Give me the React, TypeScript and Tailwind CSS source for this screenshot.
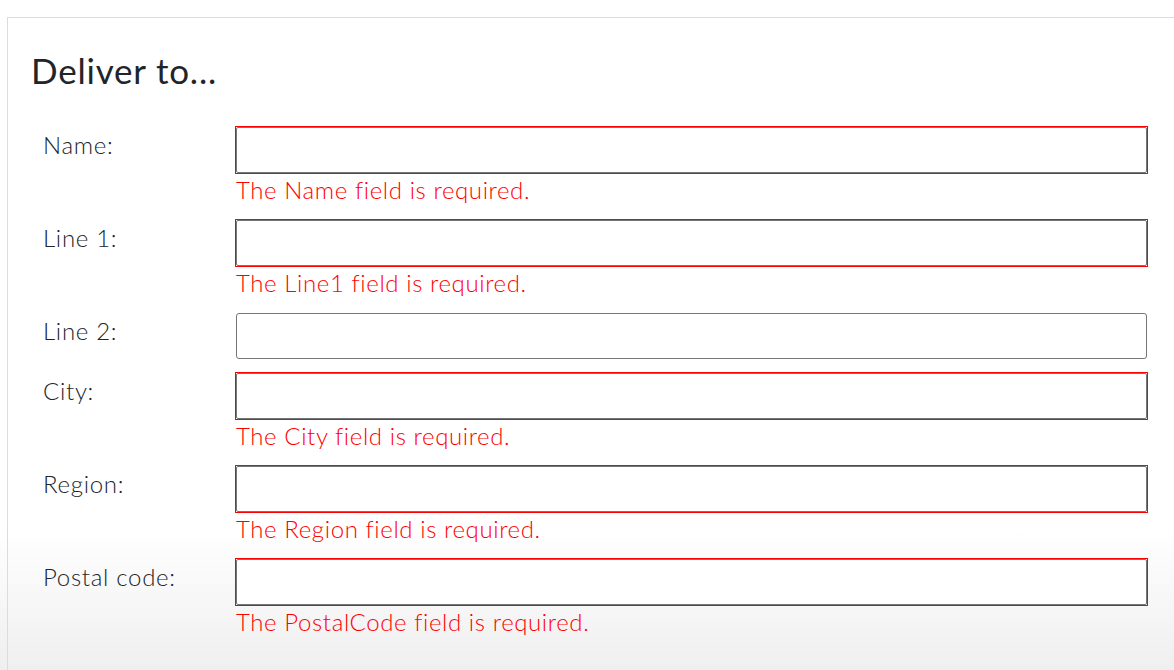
import React from 'react';

interface Field {
  id: string;
  label: string;
  error?: string;
}

const fields: Field[] = [
  { id: 'name', label: 'Name:', error: 'The Name field is required.' },
  { id: 'line1', label: 'Line 1:', error: 'The Line1 field is required.' },
  { id: 'line2', label: 'Line 2:' },
  { id: 'city', label: 'City:', error: 'The City field is required.' },
  { id: 'region', label: 'Region:', error: 'The Region field is required.' },
  { id: 'postal', label: 'Postal code:', error: 'The PostalCode field is required.' },
];

const App: React.FC = () => {
  return (
    <div
      className="h-screen overflow-hidden pl-[7px] pt-[17px] bg-[linear-gradient(to_bottom,#ffffff_528px,#efefef_670px)]"
      style={{ fontFamily: 'Lato, "Open Sans", sans-serif' }}
    >
      <div className="h-full border-l border-t border-[#dcdcdc] pl-[24px] pr-[27px] pt-[31px] text-[#212529]">
        <h2 className="text-[35px] leading-[1.2] tracking-[0.8px] -ml-[1px] mb-[36px]">Deliver to...</h2>
        <form>
          {fields.map((f) => (
            <div key={f.id} className="grid grid-cols-[204px_1fr] mb-[14px]">
              <label
                htmlFor={f.id}
                className="pl-[11px] text-[24px] leading-[36px] font-light tracking-[0.7px]"
              >
                {f.label}
              </label>
              <div>
                {f.error ? (
                  <div className="border border-[#ff0000] -m-px">
                    <input
                      id={f.id}
                      className="block w-full h-[46px] rounded-[2px] border border-[#767676] bg-white"
                    />
                  </div>
                ) : (
                  <input
                    id={f.id}
                    className="block w-full h-[46px] rounded-[3px] border border-[#767676] bg-white"
                  />
                )}
                {f.error && (
                  <div className="text-[24px] leading-[33px] text-[#ff0000] font-light tracking-[0.6px]">
                    {f.error}
                  </div>
                )}
              </div>
            </div>
          ))}
        </form>
      </div>
    </div>
  );
};

export default App;
